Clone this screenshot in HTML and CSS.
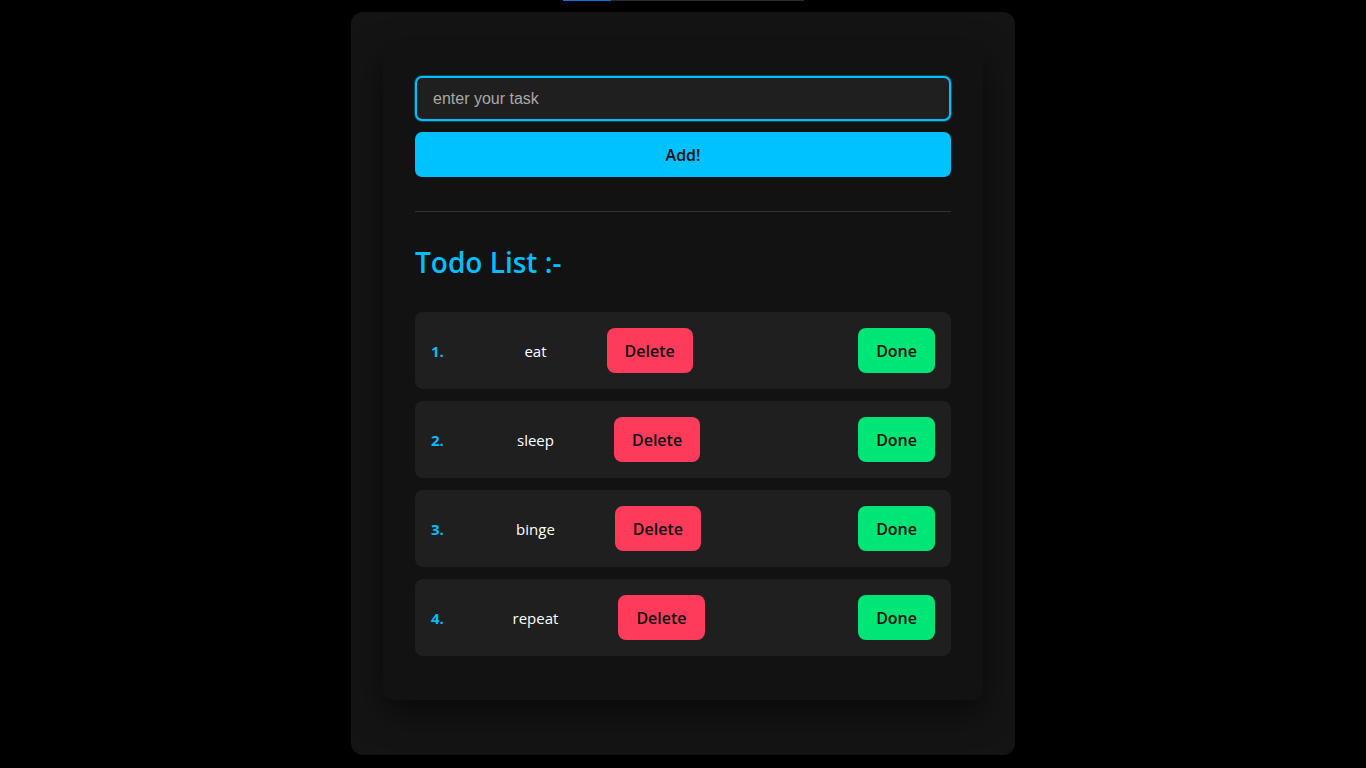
FILE: index.html
```html
<!DOCTYPE html>
<html lang="en">
<head>
<meta charset="utf-8">
<title>Todo List</title>
<link rel="stylesheet" href="styles.css">
</head>
<body>
<div class="loader"><div class="loader-fill"></div></div>
<main class="shell">
  <section class="card">
    <form class="add-form" onsubmit="return false;">
      <input class="task-input" type="text" placeholder="enter your task" autofocus>
      <button class="add-btn" type="submit">Add!</button>
    </form>
    <hr class="divider">
    <h2 class="title">Todo List :-</h2>
    <ol class="todo-list">
      <li class="todo-item">
        <span class="num">1.</span>
        <div class="middle"><span class="task">eat</span><button class="btn btn-delete">Delete</button></div>
        <button class="btn btn-done">Done</button>
      </li>
      <li class="todo-item">
        <span class="num">2.</span>
        <div class="middle"><span class="task">sleep</span><button class="btn btn-delete">Delete</button></div>
        <button class="btn btn-done">Done</button>
      </li>
      <li class="todo-item">
        <span class="num">3.</span>
        <div class="middle"><span class="task">binge</span><button class="btn btn-delete">Delete</button></div>
        <button class="btn btn-done">Done</button>
      </li>
      <li class="todo-item">
        <span class="num">4.</span>
        <div class="middle"><span class="task">repeat</span><button class="btn btn-delete">Delete</button></div>
        <button class="btn btn-done">Done</button>
      </li>
    </ol>
  </section>
</main>
</body>
</html>
```

FILE: styles.css
```css
* { box-sizing: border-box; }

html, body {
  margin: 0;
  padding: 0;
  background: #000;
  height: 100%;
}

body {
  font-family: "Open Sans", "Noto Sans", sans-serif;
  color: #fff;
  display: flex;
  flex-direction: column;
  align-items: center;
}

.loader {
  width: 241px;
  height: 1px;
  background: #2a2a2a;
  display: flex;
}

.loader-fill {
  width: 48px;
  background: #0a74da;
}

.shell {
  margin-top: 11px;
  width: 664px;
  height: 743px;
  background: #141414;
  border-radius: 12px;
  padding: 32px;
}

.card {
  background: #121212;
  border-radius: 12px;
  padding: 32px;
  box-shadow: 0 12px 32px rgba(0, 0, 0, 0.55);
}

.add-form {
  display: flex;
  flex-direction: column;
  gap: 11px;
}

.task-input {
  height: 45px;
  border: 2px solid #00bfff;
  border-radius: 7px;
  background: #1f1f1f;
  color: #fff;
  font-family: "Liberation Sans", Arial, sans-serif;
  font-size: 16px;
  padding: 0 16px;
  outline: none;
  box-shadow: 0 0 0 1px rgba(0, 160, 220, 0.35);
  caret-color: #fff;
}

.task-input::placeholder {
  color: #a9a9a9;
}

.add-btn {
  height: 45px;
  border: none;
  border-radius: 7px;
  background: #00c2ff;
  color: #111;
  font-family: "Open Sans", "Noto Sans", sans-serif;
  font-size: 16px;
  font-weight: 600;
}

.divider {
  border: none;
  border-top: 1px solid #333;
  margin: 34px 0 0;
}

.title {
  margin: 31px 0 31px;
  color: #00bfff;
  font-size: 28px;
  font-weight: 600;
  line-height: 38px;
}

.todo-list {
  list-style: none;
  margin: 0;
  padding: 0;
}

.todo-item {
  display: flex;
  align-items: center;
  background: #1f1f1f;
  border-radius: 8px;
  padding: 16px;
  margin-bottom: 12px;
}

.num {
  color: #00bfff;
  font-weight: 700;
  font-size: 15px;
  width: 14px;
}

.middle {
  flex: 1;
  display: flex;
  align-items: center;
  justify-content: center;
  gap: 60px;
  margin-right: 86px;
}

.task {
  font-size: 15px;
  color: #fff;
}

.btn {
  height: 45px;
  border: none;
  border-radius: 8px;
  padding: 0 18px;
  font-family: "Open Sans", "Noto Sans", sans-serif;
  font-size: 16px;
  font-weight: 600;
  color: #111;
}

.btn-delete {
  background: #ff3b5c;
}

.btn-done {
  background: #00e676;
}
```
